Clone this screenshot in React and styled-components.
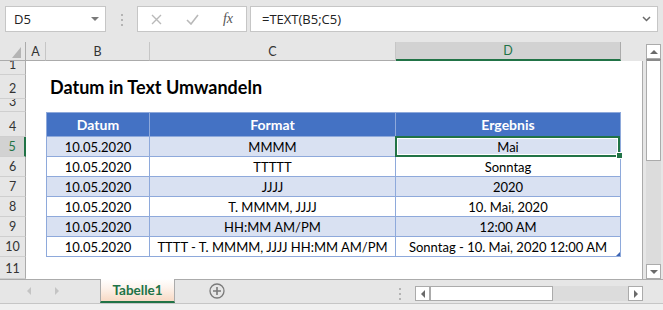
import React from 'react';
import styled, { createGlobalStyle } from 'styled-components';

const GREEN = '#217346';
const UI_GRAY = '#e6e6e6';
const LINE = '#ababab';
const TABLE_LINE = '#8ea9db';

const rows = [
  ['10.05.2020', 'MMMM', 'Mai'],
  ['10.05.2020', 'TTTTT', 'Sonntag'],
  ['10.05.2020', 'JJJJ', '2020'],
  ['10.05.2020', 'T. MMMM, JJJJ', '10. Mai, 2020'],
  ['10.05.2020', 'HH:MM AM/PM', '12:00 AM'],
  ['10.05.2020', 'TTTT - T. MMMM, JJJJ HH:MM AM/PM', 'Sonntag - 10. Mai, 2020 12:00 AM'],
];

const GlobalStyle = createGlobalStyle`
  body {
    margin: 0;
    background: ${UI_GRAY};
    font-family: "Open Sans", "Noto Sans", sans-serif;
  }
`;

const Window = styled.div`
  width: 663px;
  height: 310px;
  display: flex;
  flex-direction: column;
  background: ${UI_GRAY};
  overflow: hidden;
`;

const FormulaBar = styled.div`
  height: 42px;
  box-sizing: border-box;
  padding: 6px 5px 0 5px;
  display: flex;
  align-items: flex-start;
`;

const Box = styled.div`
  height: 26px;
  box-sizing: border-box;
  background: #fff;
  border: 1px solid #c6c6c6;
  display: flex;
  align-items: center;
`;

const NameBox = styled(Box)`
  width: 101px;
  padding: 0 6px 0 8px;
  justify-content: space-between;
  font-size: 13px;
  color: #222;
`;

const DropTri = styled.span`
  width: 0;
  height: 0;
  border-left: 4px solid transparent;
  border-right: 4px solid transparent;
  border-top: 4px solid #7a7a7a;
`;

const VDots = styled.div`
  width: 2px;
  margin: ${(p) => p.$top}px 14px 0 15px;
  display: flex;
  flex-direction: column;
  gap: 3px;

  span {
    width: 2px;
    height: 2px;
    background: #b4b4b4;
  }
`;

const FxBox = styled(Box)`
  width: 110px;
`;

const FxSlot = styled.div`
  width: 36px;
  display: flex;
  align-items: center;
  justify-content: center;
  font-family: "Liberation Serif", serif;
  font-style: italic;
  font-size: 14px;
  color: #555;
`;

const FormulaInput = styled(Box)`
  flex: 1;
  margin-left: 3px;
  padding: 0 6px 0 11px;
  justify-content: space-between;
  font-size: 13px;
  color: #222;
`;

const Main = styled.div`
  display: flex;
  height: 237px;
`;

const Sheet = styled.div`
  display: grid;
  grid-template-columns: 26px 20px 104px 246px 225px 22px;
  grid-template-rows: 19px 14px 24px 13px 25px repeat(6, 20px) 22px;
  width: 643px;
  overflow: hidden;
  font-family: Lato, "Open Sans", sans-serif;
`;

const Corner = styled.div`
  box-sizing: border-box;
  border-right: 1px solid ${LINE};
  border-bottom: 1px solid ${LINE};
  position: relative;
`;

const ColHead = styled.div`
  box-sizing: border-box;
  display: flex;
  align-items: center;
  justify-content: center;
  font-size: 12.5px;
  color: ${(p) => (p.$selected ? GREEN : '#333')};
  background: ${(p) => (p.$selected ? '#d2d2d2' : UI_GRAY)};
  border-right: 1px solid ${(p) => (p.$selected ? LINE : '#c6c6c6')};
  border-bottom: ${(p) => (p.$selected ? `2px solid ${GREEN}` : `1px solid ${LINE}`)};
`;

const HeadFill = styled.div`
  background: ${UI_GRAY};
`;

const RowHead = styled.div`
  box-sizing: border-box;
  display: flex;
  align-items: flex-end;
  justify-content: center;
  line-height: 16px;
  padding-bottom: 1px;
  overflow: hidden;
  font-size: 12.5px;
  color: ${(p) => (p.$selected ? GREEN : '#333')};
  background: ${(p) => (p.$selected ? '#d2d2d2' : UI_GRAY)};
  border-bottom: 1px solid #cfcfcf;
  border-right: ${(p) => (p.$selected ? `2px solid ${GREEN}` : `1px solid ${LINE}`)};
`;

const Cell = styled.div`
  box-sizing: border-box;
  background: #fff;
  grid-column: ${(p) => p.$span || 'auto'};
  border-right: ${(p) => (p.$edge ? `1px solid ${LINE}` : 'none')};
`;

const Title = styled.div`
  grid-column: 3 / 6;
  background: #fff;
  display: flex;
  align-items: center;
  padding-left: 4px;
  font-weight: 700;
  font-size: 18px;
  color: #000;
`;

const TCell = styled.div`
  box-sizing: border-box;
  position: relative;
  z-index: ${(p) => (p.$selected ? 2 : 'auto')};
  display: flex;
  align-items: center;
  justify-content: center;
  white-space: nowrap;
  font-size: ${(p) => (p.$head ? '14px' : '13px')};
  font-weight: ${(p) => (p.$head ? 700 : 400)};
  color: ${(p) => (p.$head ? '#fff' : '#000')};
  background: ${(p) => (p.$head ? '#4472c4' : p.$band ? '#d9e1f2' : '#fff')};
  border-right: 1px solid ${TABLE_LINE};
  border-bottom: 1px solid ${TABLE_LINE};
  border-left: ${(p) => (p.$first ? `1px solid ${TABLE_LINE}` : 'none')};
  border-top: ${(p) => (p.$head ? `1px solid ${TABLE_LINE}` : 'none')};

  ${(p) =>
    p.$selected &&
    `
    &::after {
      content: '';
      position: absolute;
      top: -1px;
      left: -1px;
      right: 0;
      bottom: -1px;
      border: 2px solid ${GREEN};
      box-shadow: inset 0 0 0 1px #fff;
    }
  `}

  ${(p) =>
    p.$resize &&
    `
    &::after {
      content: '';
      position: absolute;
      right: 0;
      bottom: 0;
      border-left: 4px solid transparent;
      border-bottom: 4px solid #3c64b4;
    }
  `}
`;

const FillHandle = styled.span`
  position: absolute;
  right: -3px;
  bottom: -3px;
  width: 5px;
  height: 5px;
  background: ${GREEN};
  border: 1px solid #fff;
  z-index: 3;
`;

const VScroll = styled.div`
  width: 20px;
  box-sizing: border-box;
  padding: 2px 2px 0 3px;
  display: flex;
  flex-direction: column;
`;

const ScrollBtn = styled.div`
  box-sizing: border-box;
  width: ${(p) => p.$w || 'auto'};
  height: ${(p) => p.$h || 'auto'};
  flex-shrink: 0;
  background: #fff;
  border: 1px solid ${LINE};
  display: flex;
  align-items: center;
  justify-content: center;
`;

const Thumb = styled.div`
  box-sizing: border-box;
  flex-shrink: 0;
  background: #fff;
  border: 1px solid ${LINE};
  ${(p) => (p.$vertical ? 'height: 102px; border-top: 2px solid #8a8a8a;' : 'width: 123px;')}
`;

const Track = styled.div`
  flex: 1;
  background: #dcdcdc;
`;

const Arrow = styled.span`
  width: 0;
  height: 0;
  ${(p) => {
    const c = p.$color || '#6a6a6a';
    const s = p.$size || 4;
    switch (p.$dir) {
      case 'up':
        return `border-left:${s}px solid transparent;border-right:${s}px solid transparent;border-bottom:${s}px solid ${c};`;
      case 'down':
        return `border-left:${s}px solid transparent;border-right:${s}px solid transparent;border-top:${s}px solid ${c};`;
      case 'left':
        return `border-top:${s}px solid transparent;border-bottom:${s}px solid transparent;border-right:${s}px solid ${c};`;
      default:
        return `border-top:${s}px solid transparent;border-bottom:${s}px solid transparent;border-left:${s}px solid ${c};`;
    }
  }}
`;

const TabBar = styled.div`
  height: 24px;
  display: flex;
  box-shadow: inset 0 1px 0 ${LINE};
`;

const NavArea = styled.div`
  width: 100px;
  display: flex;
  align-items: center;
  padding-left: 27px;
  box-sizing: border-box;
  gap: 24px;
`;

const Tab = styled.div`
  width: 75px;
  box-sizing: border-box;
  border-left: 1px solid ${LINE};
  border-right: 1px solid ${LINE};
  border-bottom: 2px solid ${GREEN};
  background: linear-gradient(#ffffff 0%, #fdf3ec 40%, #f8d9c4 100%);
  display: flex;
  align-items: center;
  justify-content: center;
  font-family: Lato, sans-serif;
  font-weight: 700;
  font-size: 13.5px;
  color: ${GREEN};
`;

const AddSheet = styled.div`
  margin-left: 34px;
  display: flex;
  align-items: center;
`;

const Spacer = styled.div`
  flex: 1;
`;

const HScroll = styled.div`
  width: 228px;
  height: 15px;
  margin: 7px 20px 0 0;
  display: flex;
`;

const StatusStrip = styled.div`
  flex: 1;
  border-top: 1px solid #c6c6c6;
  background: #f0f0f0;
`;

const Dots = ({ top }) => (
  <VDots $top={top}>
    <span />
    <span />
    <span />
  </VDots>
);

const App = () => {
  return (
    <Window>
      <GlobalStyle />
      <FormulaBar>
        <NameBox>
          D5
          <DropTri />
        </NameBox>
        <Dots top={8} />
        <FxBox>
          <FxSlot>
            <svg width="11" height="11" viewBox="0 0 11 11">
              <path d="M1 1 L10 10 M10 1 L1 10" stroke="#b9b9b9" strokeWidth="1.4" />
            </svg>
          </FxSlot>
          <FxSlot>
            <svg width="13" height="11" viewBox="0 0 13 11">
              <path d="M1 6 L5 10 L12 1" stroke="#b9b9b9" strokeWidth="1.6" fill="none" />
            </svg>
          </FxSlot>
          <FxSlot>fx</FxSlot>
        </FxBox>
        <FormulaInput>
          =TEXT(B5;C5)
          <svg width="9" height="6" viewBox="0 0 9 6">
            <path d="M1 1 L4.5 4.5 L8 1" stroke="#6a6a6a" strokeWidth="1.5" fill="none" />
          </svg>
        </FormulaInput>
      </FormulaBar>

      <Main>
        <Sheet>
          <Corner>
            <svg width="26" height="19" style={{ position: 'absolute', left: 0, top: 0 }}>
              <polygon points="21,5 21,16 12,16" fill="#b4b4b4" />
            </svg>
          </Corner>
          <ColHead>A</ColHead>
          <ColHead>B</ColHead>
          <ColHead>C</ColHead>
          <ColHead $selected>D</ColHead>
          <HeadFill />

          <RowHead>1</RowHead>
          <Cell $span="2 / 6" />
          <Cell $edge />

          <RowHead>2</RowHead>
          <Cell />
          <Title>Datum in Text Umwandeln</Title>
          <Cell $edge />

          <RowHead>3</RowHead>
          <Cell $span="2 / 6" />
          <Cell $edge />

          <RowHead>4</RowHead>
          <Cell />
          <TCell $head $first>Datum</TCell>
          <TCell $head>Format</TCell>
          <TCell $head>Ergebnis</TCell>
          <Cell $edge />

          {rows.map((r, i) => {
            const band = i % 2 === 0;
            const sel = i === 0;
            const last = i === rows.length - 1;
            return (
              <React.Fragment key={i}>
                <RowHead $selected={sel}>{i + 5}</RowHead>
                <Cell />
                <TCell $band={band} $first>{r[0]}</TCell>
                <TCell $band={band}>{r[1]}</TCell>
                <TCell $band={band} $selected={sel} $resize={last}>
                  {r[2]}
                  {sel && <FillHandle />}
                </TCell>
                <Cell $edge />
              </React.Fragment>
            );
          })}

          <RowHead>11</RowHead>
          <Cell $span="2 / 6" />
          <Cell $edge />
        </Sheet>

        <VScroll>
          <ScrollBtn $h="15px">
            <Arrow $dir="up" $size={4} />
          </ScrollBtn>
          <Thumb $vertical />
          <Track />
          <ScrollBtn $h="15px">
            <Arrow $dir="down" $size={4} />
          </ScrollBtn>
        </VScroll>
      </Main>

      <TabBar>
        <NavArea>
          <Arrow $dir="left" $size={4} $color="#c4c4c4" />
          <Arrow $dir="right" $size={4} $color="#c4c4c4" />
        </NavArea>
        <Tab>Tabelle1</Tab>
        <AddSheet>
          <svg width="16" height="16" viewBox="0 0 16 16">
            <circle cx="8" cy="8" r="7" stroke="#7a7a7a" strokeWidth="1.3" fill="none" />
            <path d="M8 4 V12 M4 8 H12" stroke="#7a7a7a" strokeWidth="1.6" />
          </svg>
        </AddSheet>
        <Spacer />
        <Dots top={9} />
        <HScroll>
          <ScrollBtn $w="15px">
            <Arrow $dir="left" $size={4} />
          </ScrollBtn>
          <Thumb />
          <Track />
          <ScrollBtn $w="15px">
            <Arrow $dir="right" $size={4} />
          </ScrollBtn>
        </HScroll>
      </TabBar>
      <StatusStrip />
    </Window>
  );
};

export default App;
